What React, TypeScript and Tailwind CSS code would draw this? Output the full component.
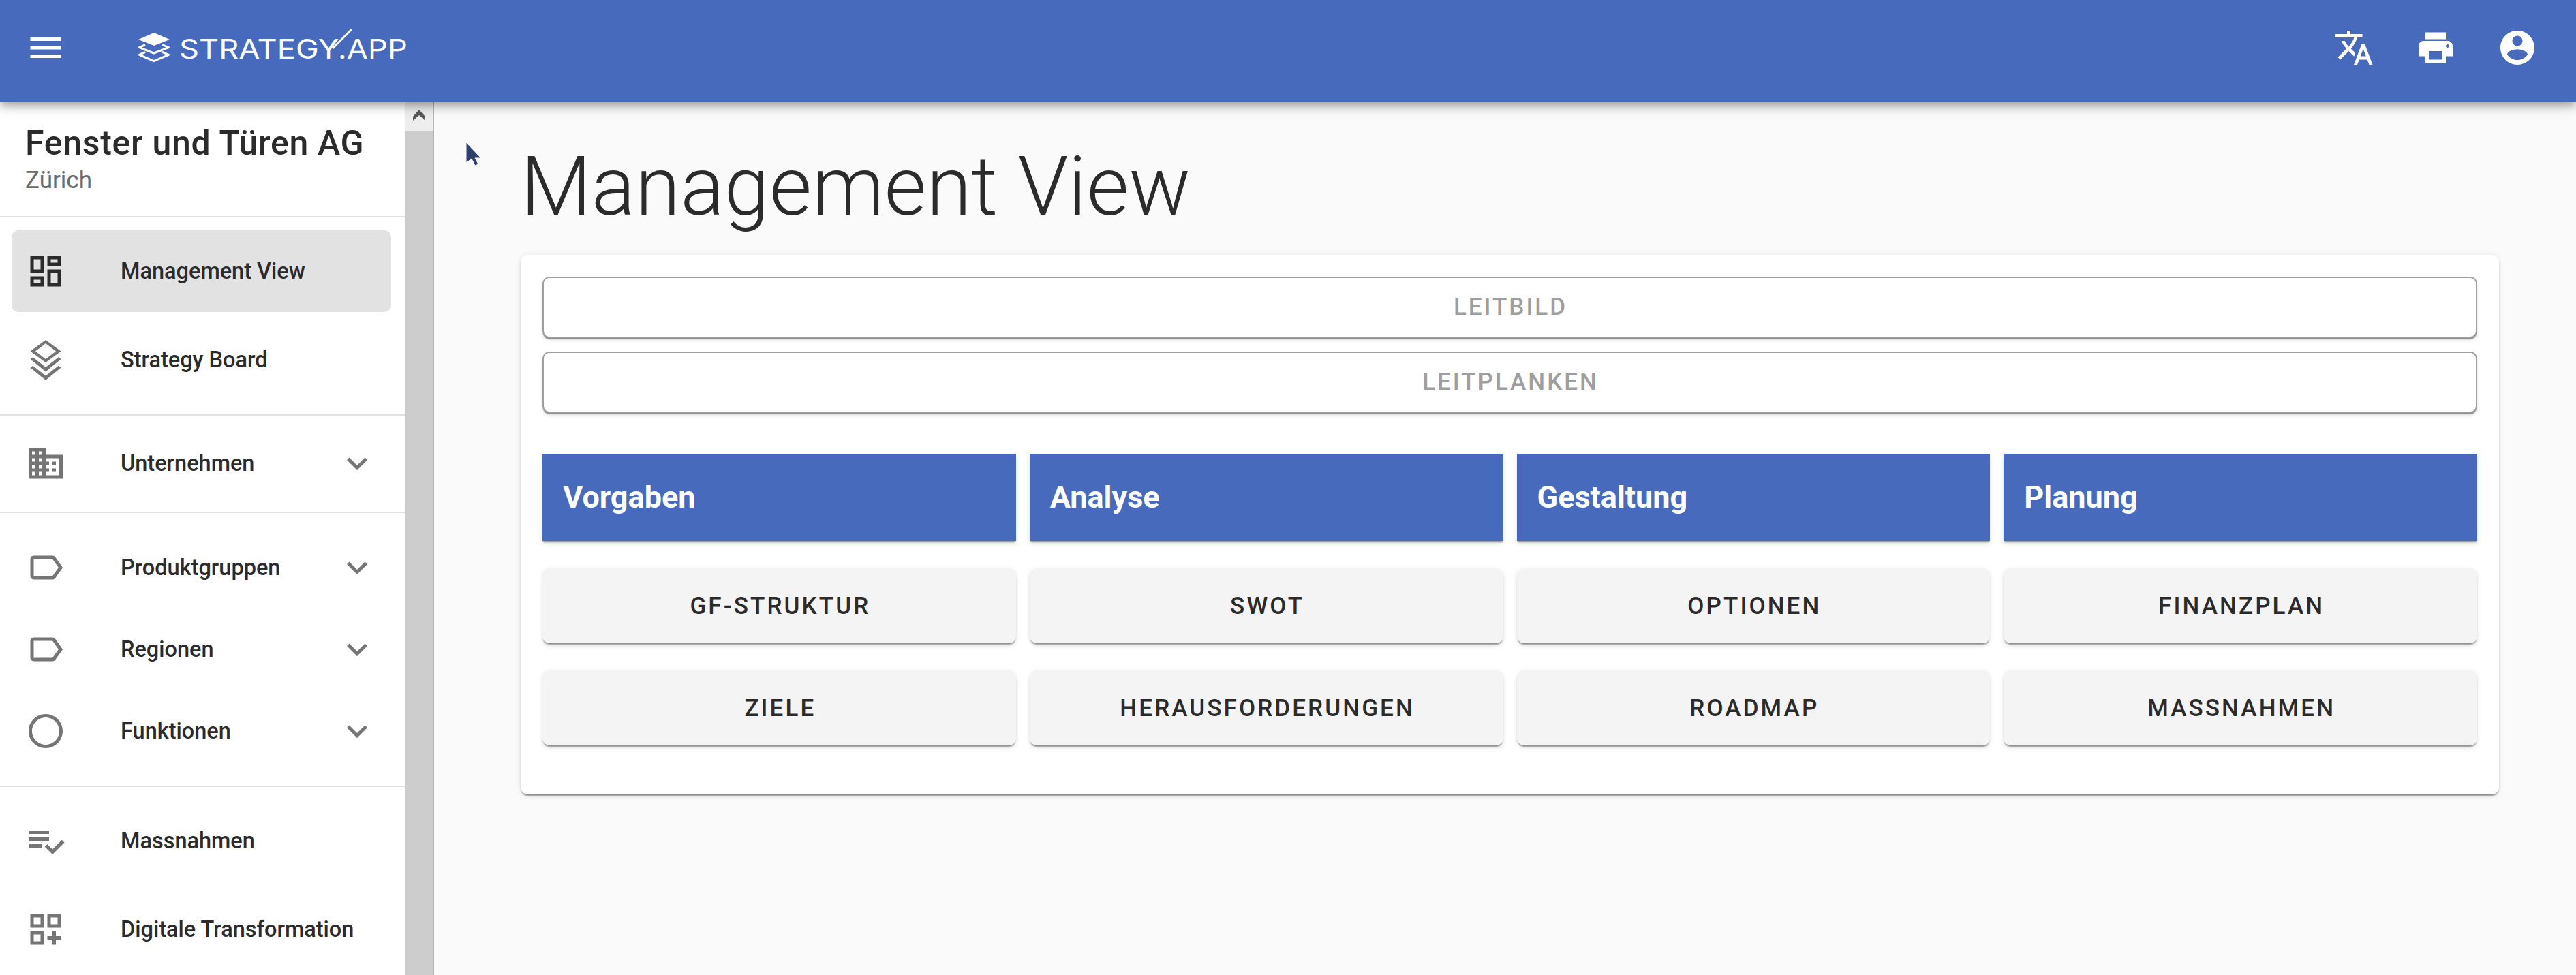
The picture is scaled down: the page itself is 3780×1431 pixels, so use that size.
import type { ReactNode } from "react"

const paths = {
  menu: "M3 18h18v-2H3v2zm0-5h18v-2H3v2zm0-7v2h18V6H3z",
  translate:
    "M12.87 15.07l-2.54-2.51.03-.03c1.74-1.94 2.98-4.17 3.71-6.53H17V4h-7V2H8v2H1v2h11.17C11.5 7.92 10.44 9.75 9 11.35 8.07 10.32 7.3 9.19 6.69 8h-2c.73 1.63 1.73 3.17 2.98 4.56l-5.09 5.02L4 19l5-5 3.11 3.11.76-2.04zM18.5 10h-2L12 22h2l1.12-3h4.75L21 22h2l-4.5-12zm-2.62 7l1.62-4.33L19.12 17h-3.24z",
  print:
    "M19 8H5c-1.66 0-3 1.34-3 3v6h4v4h12v-4h4v-6c0-1.66-1.34-3-3-3zm-3 11H8v-5h8v5zm3-7c-.55 0-1-.45-1-1s.45-1 1-1 1 .45 1 1-.45 1-1 1zm-1-9H6v4h12V3z",
  account:
    "M12 2C6.48 2 2 6.48 2 12s4.48 10 10 10 10-4.48 10-10S17.52 2 12 2zm0 3c1.66 0 3 1.34 3 3s-1.34 3-3 3-3-1.34-3-3 1.34-3 3-3zm0 14.2c-2.5 0-4.71-1.28-6-3.22.03-1.99 4-3.08 6-3.08 1.99 0 5.97 1.09 6 3.08-1.29 1.94-3.5 3.22-6 3.22z",
  dashboard:
    "M19 5v2h-4V5h4M9 5v6H5V5h4m10 8v6h-4v-6h4M9 17v2H5v-2h4M21 3h-8v6h8V3zM11 3H3v10h8V3zm10 8h-8v10h8V11zm-10 4H3v6h8v-6z",
  layers:
    "M12 .4 21 7l-9 6.6L3 7zM12 2.4 6 7l6 4.6L18 7zM3 11.6l1.5-1.1L12 16.4l7.5-5.9 1.5 1.1L12 19zM3 16.6l1.5-1.1L12 21.4l7.5-5.9 1.5 1.1L12 24z",
  domain:
    "M12 7V3H2v18h20V7H12zM6 19H4v-2h2v2zm0-4H4v-2h2v2zm0-4H4V9h2v2zm0-4H4V5h2v2zm4 12H8v-2h2v2zm0-4H8v-2h2v2zm0-4H8V9h2v2zm0-4H8V5h2v2zm10 12h-8v-2h2v-2h-2v-2h2v-2h-2V9h8v10zm-2-8h-2v2h2v-2zm0 4h-2v2h2v-2z",
  label:
    "M17.63 5.84C17.27 5.33 16.67 5 16 5L5 5.01C3.9 5.01 3 5.9 3 7v10c0 1.1.9 1.99 2 1.99L16 19c.67 0 1.27-.33 1.63-.84L22 12l-4.37-6.16zM16 17H5V7h11l3.55 5L16 17z",
  circle:
    "M12 2C6.47 2 2 6.47 2 12s4.47 10 10 10 10-4.47 10-10S17.53 2 12 2zm0 18c-4.41 0-8-3.59-8-8s3.59-8 8-8 8 3.59 8 8-3.59 8-8 8z",
  checklist:
    "M14 10H2v2h12v-2zm0-4H2v2h12V6zM2 16h8v-2H2v2zm19.5-4.5L23 13l-6.99 7-4.51-4.5L13 14l3.01 3 5.49-5.5z",
  customize:
    "M3 11h8V3H3v8zm2-6h4v4H5V5zm8-2v8h8V3h-8zm6 6h-4V5h4v4zM3 21h8v-8H3v8zm2-6h4v4H5v-4zm13-2h-2v3h-3v2h3v3h2v-3h3v-2h-3v-3z",
  expand: "M16.59 8.59L12 13.17 7.41 8.59 6 10l6 6 6-6z",
}

function Icon({ d, className }: { d: string; className: string }) {
  return (
    <svg viewBox="0 0 24 24" fill="currentColor" className={"h-[60px] w-[60px] shrink-0 " + className}>
      <path d={d} />
    </svg>
  )
}

function NavRow({
  icon,
  label,
  active,
  expandable,
  className,
}: {
  icon: string
  label: string
  active?: boolean
  expandable?: boolean
  className?: string
}) {
  return (
    <div
      className={
        "mx-[17px] mr-[21px] flex h-[120px] items-center rounded-[10px] pl-[20px] pr-[20px] " +
        (active ? "bg-[#e2e2e2] " : "") +
        (className ?? "")
      }
    >
      <Icon d={icon} className={active ? "text-[#2b2b2b]" : "text-[#757575]"} />
      <span className="ml-[80px] flex-1 pt-[1px] text-[32.5px] font-medium text-[#2b2b2b]">{label}</span>
      {expandable && <Icon d={paths.expand} className="text-[#757575]" />}
    </div>
  )
}

function Divider({ className }: { className: string }) {
  return <div className={"h-[2px] bg-[#e2e2e2] " + className} />
}

function Logo() {
  return (
    <div className="ml-[106px] flex items-center">
      <svg viewBox="0 0 46 44" className="h-[44px] w-[46px]" fill="none" stroke="white" strokeWidth="3" strokeLinejoin="round">
        <path d="M23 0 46 10 23 19 0 10z" fill="white" stroke="none" />
        <path d="M10 17.7 1.5 21.7 22.7 30 44.5 21.7 35 17.7" />
        <path d="M10 28.3 1.5 32.3 22.7 41.7 44.5 32.3 35 28.3" />
      </svg>
      <div className="relative ml-[14px] mt-[5px]">
        <span className="block origin-left scale-x-[1.13] text-[40px] font-normal leading-[44px] text-white [font-family:Inter,sans-serif]">
          STRATEGY.APP
        </span>
        <svg viewBox="0 0 30 30" className="absolute left-[224px] top-[-8px] h-[30px] w-[30px]" stroke="white" strokeWidth="3">
          <path d="M1 29 29 1" />
        </svg>
      </div>
    </div>
  )
}

function OutlineButton({ children }: { children: ReactNode }) {
  return (
    <div className="flex h-[90px] items-center justify-center rounded-[10px] border-2 border-[#9e9e9e] bg-white pl-[2px] pt-[1px] text-[35px] font-medium tracking-[3px] text-[#9e9e9e] shadow-[0_3px_1px_-1px_rgba(0,0,0,0.38),0_4px_5px_rgba(0,0,0,0.1)]">
      {children}
    </div>
  )
}

function Heading({ children }: { children: ReactNode }) {
  return (
    <div className="flex h-[128px] items-center bg-[#486abd] pl-[30px] text-[45px] font-bold text-white shadow-[0_3px_2px_-1px_rgba(0,0,0,0.35),0_4px_8px_rgba(0,0,0,0.1)]">
      {children}
    </div>
  )
}

function Tile({ children }: { children: ReactNode }) {
  return (
    <div className="flex h-[110px] items-center justify-center rounded-[10px] bg-[#f4f4f4] pl-[3px] pt-[3px] text-[35px] font-medium tracking-[3.1px] text-[#2b2b2b] shadow-[0_3px_2px_-1px_rgba(0,0,0,0.38),0_5px_6px_rgba(0,0,0,0.08),0_0_8px_rgba(0,0,0,0.05)]">
      {children}
    </div>
  )
}

export default function App() {
  return (
    <div className="flex h-[1431px] w-[3780px] flex-col overflow-hidden bg-[#fafafa] [font-family:Roboto,sans-serif]">
      <header className="relative z-10 flex h-[149px] shrink-0 items-start bg-[#486abd] shadow-[0_5px_10px_-2px_rgba(0,0,0,0.2),0_10px_12px_rgba(0,0,0,0.14),0_3px_25px_rgba(0,0,0,0.12)]">
        <div className="flex h-[139px] w-full items-center pl-[37px] pr-[56px] text-white">
          <Icon d={paths.menu} className="" />
          <Logo />
          <div className="ml-auto flex gap-[60px]">
            <Icon d={paths.translate} className="" />
            <Icon d={paths.print} className="" />
            <Icon d={paths.account} className="" />
          </div>
        </div>
      </header>

      <div className="flex min-h-0 flex-1">
        <aside className="flex w-[637px] shrink-0">
          <nav className="w-[595px] overflow-hidden bg-white">
            <div className="h-[168px] pl-[37px] pt-[31px]">
              <div className="text-[50px] font-medium leading-[60px] tracking-[0.7px] text-[#2b2b2b]">Fenster und Türen AG</div>
              <div className="mt-[5px] text-[35px] leading-[40px] text-[#6b6b6b]">Zürich</div>
            </div>
            <Divider className="mb-[19px]" />
            <NavRow icon={paths.dashboard} label="Management View" active className="mb-[10px]" />
            <NavRow icon={paths.layers} label="Strategy Board" />
            <Divider className="mt-[20px] mb-[10px]" />
            <NavRow icon={paths.domain} label="Unternehmen" expandable />
            <Divider className="mt-[11px] mb-[20px]" />
            <NavRow icon={paths.label} label="Produktgruppen" expandable />
            <NavRow icon={paths.label} label="Regionen" expandable />
            <NavRow icon={paths.circle} label="Funktionen" expandable />
            <Divider className="mt-[20px] mb-[19px]" />
            <NavRow icon={paths.checklist} label="Massnahmen" className="mb-[10px]" />
            <NavRow icon={paths.customize} label="Digitale Transformation" />
          </nav>
          <div className="flex w-[42px] flex-col border-r-2 border-[#b5b5b5] bg-[#cdcdcd]">
            <div className="flex h-[43px] items-start justify-center bg-[#eeeeee] pt-[12px]">
              <svg viewBox="0 0 18 16" className="h-[16px] w-[18px]" fill="#5a5a5a">
                <path d="M9 0 18 10v6L9 8 0 16v-6z" />
              </svg>
            </div>
          </div>
        </aside>

        <main className="relative min-w-0 flex-1 pl-[127px] pr-[113px]">
          <svg viewBox="0 0 24 35" className="absolute left-[46px] top-[59px] h-[35px] w-[24px]">
            <path d="M1 1 23 24 14 24 19 33 14 35 9 25 1 31z" fill="#2f3f6f" stroke="white" strokeWidth="1" />
          </svg>
          <h1 className="h-[225px] pt-[50px] text-[120px] font-light leading-[150px] text-[#2b2b2b]">Management View</h1>
          <section className="rounded-[10px] bg-white px-[32px] pb-[72px] pt-[32px] shadow-[0_3px_2px_-1px_rgba(0,0,0,0.35),0_3px_5px_rgba(0,0,0,0.1),0_0_10px_rgba(0,0,0,0.06)]">
            <div className="flex flex-col gap-[20px]">
              <OutlineButton>LEITBILD</OutlineButton>
              <OutlineButton>LEITPLANKEN</OutlineButton>
            </div>
            <div className="mt-[60px] grid grid-cols-4 gap-x-[20px] gap-y-[40px]">
              <Heading>Vorgaben</Heading>
              <Heading>Analyse</Heading>
              <Heading>Gestaltung</Heading>
              <Heading>Planung</Heading>
              <Tile>GF-STRUKTUR</Tile>
              <Tile>SWOT</Tile>
              <Tile>OPTIONEN</Tile>
              <Tile>FINANZPLAN</Tile>
              <Tile>ZIELE</Tile>
              <Tile>HERAUSFORDERUNGEN</Tile>
              <Tile>ROADMAP</Tile>
              <Tile>MASSNAHMEN</Tile>
            </div>
          </section>
        </main>
      </div>
    </div>
  )
}
